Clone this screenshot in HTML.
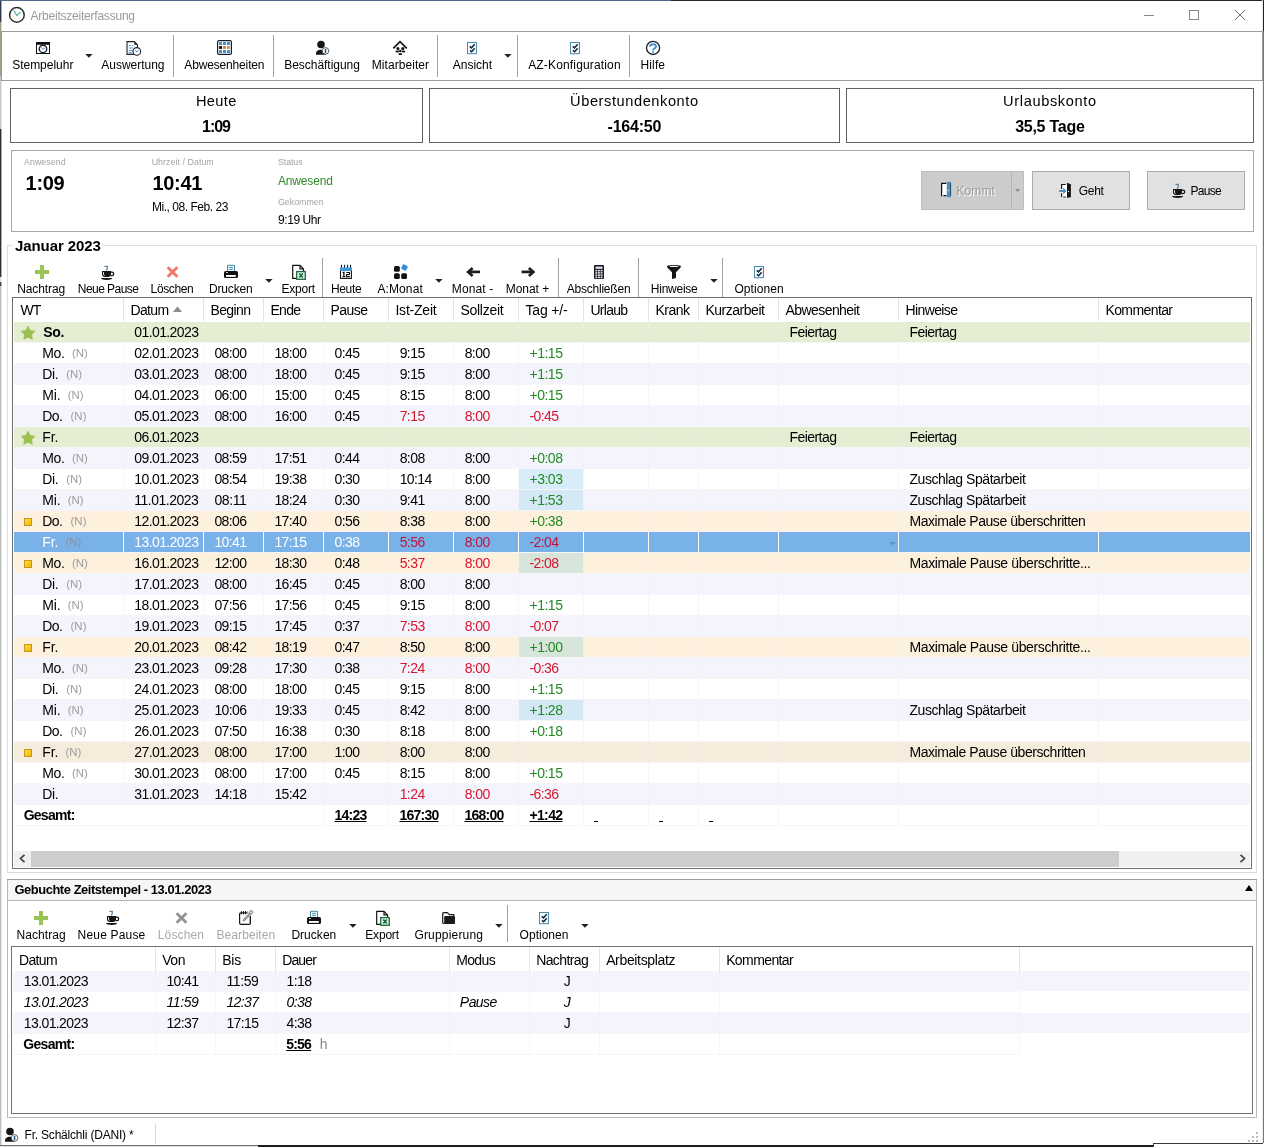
<!DOCTYPE html>
<html><head><meta charset="utf-8"><title>Arbeitszeiterfassung</title>
<style>
html,body{margin:0;padding:0;background:#fff;}
body{width:1264px;height:1147px;overflow:hidden;position:relative;font-family:"Liberation Sans",sans-serif;}
.r{position:absolute;box-sizing:border-box;}
.t{position:absolute;white-space:pre;}
#w{position:absolute;left:0;top:0;width:1264px;height:1147px;will-change:transform;}
svg{overflow:visible;}
</style></head><body><div id="w">
<div class="r" style="left:0px;top:0px;width:1264px;height:1147px;background:#fff;"></div>
<div class="r" style="left:0px;top:0px;width:1px;height:22px;background:#2b3850;"></div>
<div class="r" style="left:1px;top:0px;width:1px;height:22px;background:#2b3850;opacity:.4;"></div>
<div class="r" style="left:0px;top:22px;width:1px;height:54px;background:#a39d88;"></div>
<div class="r" style="left:1px;top:22px;width:1px;height:54px;background:#a39d88;opacity:.4;"></div>
<div class="r" style="left:0px;top:76px;width:1px;height:53px;background:#c6c6c6;"></div>
<div class="r" style="left:1px;top:76px;width:1px;height:53px;background:#c6c6c6;opacity:.4;"></div>
<div class="r" style="left:0px;top:129px;width:1px;height:148px;background:#303030;"></div>
<div class="r" style="left:1px;top:129px;width:1px;height:148px;background:#303030;opacity:.4;"></div>
<div class="r" style="left:0px;top:277px;width:1px;height:5px;background:#e0e0e0;"></div>
<div class="r" style="left:1px;top:277px;width:1px;height:5px;background:#e0e0e0;opacity:.4;"></div>
<div class="r" style="left:0px;top:282px;width:1px;height:4px;background:#404040;"></div>
<div class="r" style="left:1px;top:282px;width:1px;height:4px;background:#404040;opacity:.4;"></div>
<div class="r" style="left:0px;top:286px;width:1px;height:861px;background:#bdbdbd;"></div>
<div class="r" style="left:1px;top:286px;width:1px;height:861px;background:#bdbdbd;opacity:.4;"></div>
<div class="r" style="left:0px;top:0px;width:671px;height:1px;background:#55668a;"></div>
<div class="r" style="left:671px;top:0px;width:593px;height:1px;background:#282828;"></div>
<div class="r" style="left:1263px;top:0px;width:1px;height:31px;background:#222;"></div>
<div class="r" style="left:1263px;top:31px;width:1px;height:1116px;background:#777;"></div>
<div class="r" style="left:1262px;top:0px;width:1px;height:1147px;background:#ececec;"></div>
<div class="r" style="left:0px;top:1145px;width:258px;height:1px;background:#6e6e6e;"></div>
<div class="r" style="left:0px;top:1146px;width:258px;height:1px;background:#e4e4e4;"></div>
<div class="r" style="left:258px;top:1145px;width:895px;height:2px;background:#1e1e1e;"></div>
<div class="r" style="left:1153px;top:1143px;width:111px;height:4px;background:#fff;"></div>
<div class="r" style="left:1153px;top:1143px;width:110px;height:1px;background:#3a3a3a;"></div>
<div class="r" style="left:1153px;top:1143px;width:1px;height:4px;background:#3a3a3a;"></div>
<svg class="r" style="left:8px;top:6px" width="18" height="18" viewBox="0 0 18 18"><circle cx="8.9" cy="8.9" r="7.3" fill="#fff" stroke="#2a3030" stroke-width="1.5"/><path d="M5.9 4.3 L8.7 9.5 L12.7 6.2" fill="none" stroke="#5fb0a8" stroke-width="1.2"/></svg>
<span class="t" style="left:30.50px;top:6.00px;font-size:12px;line-height:20px;color:#999;letter-spacing:-0.222px;">Arbeitszeiterfassung</span>
<svg class="r" style="left:1144px;top:8.5px" width="12" height="12" viewBox="0 0 12 12"><path d="M0 6.5 H10" stroke="#8a8a8a" stroke-width="1"/></svg>
<svg class="r" style="left:1188px;top:9px" width="12" height="12" viewBox="0 0 12 12"><rect x="1.5" y="1.5" width="9" height="9" fill="none" stroke="#8a8a8a" stroke-width="1"/></svg>
<svg class="r" style="left:1235px;top:10px" width="10" height="10" viewBox="0 0 10 10"><path d="M0 0 L10 10 M10 0 L0 10" stroke="#707070" stroke-width="1"/></svg>
<div class="r" style="left:1px;top:31px;width:1262px;height:50px;background:#fff;border:1px solid #9c9c9c;"></div>
<span class="t" style="left:12.20px;top:55.00px;font-size:12px;line-height:20px;color:#000;letter-spacing:-0.019px;">Stempeluhr</span>
<svg class="r" style="left:85px;top:54px" width="8" height="4" viewBox="0 0 8 4"><path d="M0.2 0 H7.6 L3.9 3.7 Z" fill="#222"/></svg>
<span class="t" style="left:101.30px;top:55.00px;font-size:12px;line-height:20px;color:#000;letter-spacing:-0.019px;">Auswertung</span>
<div class="r" style="left:173px;top:35px;width:1px;height:42px;background:#a0a0a0;"></div>
<span class="t" style="left:184.30px;top:55.00px;font-size:12px;line-height:20px;color:#000;letter-spacing:-0.155px;">Abwesenheiten</span>
<div class="r" style="left:273px;top:35px;width:1px;height:42px;background:#a0a0a0;"></div>
<span class="t" style="left:284.20px;top:55.00px;font-size:12px;line-height:20px;color:#000;letter-spacing:-0.030px;">Beschäftigung</span>
<span class="t" style="left:371.80px;top:55.00px;font-size:12px;line-height:20px;color:#000;letter-spacing:0.051px;">Mitarbeiter</span>
<div class="r" style="left:437px;top:35px;width:1px;height:42px;background:#a0a0a0;"></div>
<span class="t" style="left:452.80px;top:55.00px;font-size:12px;line-height:20px;color:#000;letter-spacing:-0.025px;">Ansicht</span>
<svg class="r" style="left:503.5px;top:54px" width="8" height="4" viewBox="0 0 8 4"><path d="M0.2 0 H7.6 L3.9 3.7 Z" fill="#222"/></svg>
<div class="r" style="left:517px;top:35px;width:1px;height:42px;background:#a0a0a0;"></div>
<span class="t" style="left:528.20px;top:55.00px;font-size:12px;line-height:20px;color:#000;letter-spacing:0.157px;">AZ-Konfiguration</span>
<div class="r" style="left:629px;top:35px;width:1px;height:42px;background:#a0a0a0;"></div>
<span class="t" style="left:640.60px;top:55.00px;font-size:12px;line-height:20px;color:#000;letter-spacing:0.097px;">Hilfe</span>
<svg class="r" style="left:36px;top:42px" width="14" height="12" viewBox="0 0 14 12"><rect x="0.5" y="0.5" width="13" height="11" fill="#fff" stroke="#111" stroke-width="1"/><rect x="0" y="0" width="14" height="2.8" fill="#111"/><circle cx="7" cy="6.9" r="3.7" fill="#fff" stroke="#1c2433" stroke-width="1.4"/><path d="M5.5 5.4 L7 7.4 L8.9 5.9" fill="none" stroke="#5d82ab" stroke-width="1"/></svg>
<svg class="r" style="left:126px;top:41px" width="15" height="15" viewBox="0 0 15 15"><path d="M1 0.6 H8.3 L11.4 3.7 V13.4 H1 Z" fill="#fff" stroke="#222" stroke-width="1.1"/><path d="M8.3 0.6 V3.7 H11.4 Z" fill="#222"/><path d="M2.8 4.5 H5 M2.8 7 H7.2 M2.8 9.5 H6.6 M2.8 11.6 H5.6 M6 4.5 H7.4" stroke="#4a9ad4" stroke-width="1.1"/><circle cx="10.8" cy="10.4" r="3.8" fill="#fff" stroke="#1c2433" stroke-width="1.1"/><path d="M9.3 9.2 L10.8 10.9 L12.5 9.6" fill="none" stroke="#3a8fd0" stroke-width="1"/></svg>
<svg class="r" style="left:217px;top:40px" width="15" height="15" viewBox="0 0 15 15"><rect x="0.6" y="0.6" width="13.8" height="13.8" rx="1.4" fill="#fff" stroke="#141e30" stroke-width="1.2"/><rect x="2.10" y="2.10" width="2.9" height="2.8" fill="#3d84c0"/><rect x="6.05" y="2.10" width="2.9" height="2.8" fill="#3d84c0"/><rect x="10.00" y="2.10" width="2.9" height="2.8" fill="#3d84c0"/><rect x="2.10" y="6.10" width="2.9" height="2.8" fill="#1a0a0a"/><rect x="6.05" y="6.10" width="2.9" height="2.8" fill="#e07a4a"/><rect x="10.00" y="6.10" width="2.9" height="2.8" fill="#b0a050"/><rect x="2.10" y="10.10" width="2.9" height="2.8" fill="#3a8ab4"/><rect x="6.05" y="10.10" width="2.9" height="2.8" fill="#3d84c0"/><rect x="10.00" y="10.10" width="2.9" height="2.8" fill="#3a8ab4"/></svg>
<svg class="r" style="left:315px;top:41px" width="14" height="14" viewBox="0 0 14 14"><circle cx="6" cy="3.5" r="3.8" fill="#151515"/><path d="M1 13.7 C0.8 10.2 2.6 8.8 6 8.8 C8.4 8.8 10 9.6 10.6 11 V13.7 Z" fill="#151515"/><circle cx="10.5" cy="9.9" r="3.3" fill="#fff" stroke="#2a3540" stroke-width="0.8"/><rect x="9.8" y="7.9" width="1.5" height="4" fill="#1f4e79"/></svg>
<svg class="r" style="left:393px;top:41px" width="15" height="15" viewBox="0 0 15 15"><path d="M0.3 7.4 L7 0.7 L13.8 7.4" fill="none" stroke="#151515" stroke-width="1.7"/><circle cx="4.9" cy="7.6" r="1.55" fill="#151515"/><circle cx="9.8" cy="7.6" r="1.55" fill="#151515"/><ellipse cx="4.3" cy="10.5" rx="1.9" ry="0.9" fill="#151515"/><ellipse cx="10.5" cy="10.5" rx="1.9" ry="0.9" fill="#151515"/><circle cx="7.3" cy="10" r="1.3" fill="#151515"/><path d="M5.6 12.2 H9 V13.2 C9 14.4 5.6 14.4 5.6 13.2 Z" fill="#151515"/></svg>
<svg class="r" style="left:467px;top:42px" width="11" height="13" viewBox="0 0 11 13"><rect x="0.5" y="0.5" width="9" height="11.2" fill="#f2fdff" stroke="#4f88aa" stroke-width="1"/><path d="M2.8 4.4 L4.4 5.9 L7.7 2.2 M3 8.4 L4.6 9.8 L7.7 6.3" fill="none" stroke="#16202e" stroke-width="1.5"/></svg>
<svg class="r" style="left:570px;top:42px" width="11" height="13" viewBox="0 0 11 13"><rect x="0.5" y="0.5" width="9" height="11.2" fill="#f2fdff" stroke="#4f88aa" stroke-width="1"/><path d="M2.8 4.4 L4.4 5.9 L7.7 2.2 M3 8.4 L4.6 9.8 L7.7 6.3" fill="none" stroke="#16202e" stroke-width="1.5"/></svg>
<svg class="r" style="left:646px;top:41px" width="15" height="15" viewBox="0 0 15 15"><circle cx="7.05" cy="6.95" r="6.55" fill="#fafeff" stroke="#1a1e28" stroke-width="1.3"/><path d="M3.9 5.6 C4.2 2.6 10 2.4 10 5.5 C10 7.4 7.2 7.7 7.05 9.4" fill="none" stroke="#4a8cc0" stroke-width="1.9"/><rect x="6.2" y="10.2" width="1.7" height="1.6" fill="#4a8cc0"/></svg>
<div class="r" style="left:10px;top:88px;width:413px;height:55px;background:#fff;border:1px solid #606060;"></div>
<span class="t" style="left:195.90px;top:91.00px;font-size:14.6px;line-height:20px;color:#000;letter-spacing:0.362px;">Heute</span>
<span class="t" style="left:202.10px;top:117.00px;font-size:16px;line-height:20px;color:#000;letter-spacing:-1.072px;font-weight:bold;">1:09</span>
<div class="r" style="left:429px;top:88px;width:411px;height:55px;background:#fff;border:1px solid #606060;"></div>
<span class="t" style="left:570.10px;top:91.00px;font-size:14.6px;line-height:20px;color:#000;letter-spacing:0.579px;">Überstundenkonto</span>
<span class="t" style="left:607.60px;top:117.00px;font-size:16px;line-height:20px;color:#000;letter-spacing:-0.225px;font-weight:bold;">-164:50</span>
<div class="r" style="left:846px;top:88px;width:408px;height:55px;background:#fff;border:1px solid #606060;"></div>
<span class="t" style="left:1003.10px;top:91.00px;font-size:14.6px;line-height:20px;color:#000;letter-spacing:0.634px;">Urlaubskonto</span>
<span class="t" style="left:1015.15px;top:117.00px;font-size:16px;line-height:20px;color:#000;letter-spacing:-0.255px;font-weight:bold;">35,5 Tage</span>
<div class="r" style="left:11px;top:150px;width:1243px;height:82px;background:#fff;border:1px solid #a9a9a9;"></div>
<span class="t" style="left:24.00px;top:152.00px;font-size:8.8px;line-height:20px;color:#a3a3a3;letter-spacing:0.086px;">Anwesend</span>
<span class="t" style="left:25.60px;top:173.00px;font-size:20px;line-height:20px;color:#000;letter-spacing:-0.340px;font-weight:bold;">1:09</span>
<span class="t" style="left:151.70px;top:152.00px;font-size:8.8px;line-height:20px;color:#a3a3a3;letter-spacing:0.063px;">Uhrzeit / Datum</span>
<span class="t" style="left:152.50px;top:173.00px;font-size:20px;line-height:20px;color:#000;letter-spacing:-0.340px;font-weight:bold;">10:41</span>
<span class="t" style="left:152.00px;top:197.00px;font-size:12px;line-height:20px;color:#000;letter-spacing:-0.465px;">Mi., 08. Feb. 23</span>
<span class="t" style="left:278.00px;top:152.00px;font-size:8.8px;line-height:20px;color:#a3a3a3;letter-spacing:-0.070px;">Status</span>
<span class="t" style="left:278.00px;top:171.00px;font-size:12px;line-height:20px;color:#2d8a2d;letter-spacing:-0.177px;">Anwesend</span>
<span class="t" style="left:278.00px;top:192.00px;font-size:8.8px;line-height:20px;color:#a3a3a3;letter-spacing:0.017px;">Gekommen</span>
<span class="t" style="left:278.00px;top:210.00px;font-size:12px;line-height:20px;color:#000;letter-spacing:-0.431px;">9:19 Uhr</span>
<div class="r" style="left:921px;top:171px;width:103px;height:39px;background:#cccccc;border:1px solid #bfbfbf;"></div>
<div class="r" style="left:1011px;top:172px;width:1px;height:37px;background:#b5b5b5;"></div>
<span class="t" style="left:956.40px;top:181.00px;font-size:12px;line-height:20px;color:#9a9a9a;letter-spacing:0.124px;text-shadow:1px 1px 0 #fff;">Kommt</span>
<svg class="r" style="left:1014.7px;top:189px" width="6" height="4" viewBox="0 0 6 4"><path d="M0 0 H5.2 L2.6 3 Z" fill="#8c8c8c"/></svg>
<div class="r" style="left:1032px;top:171px;width:98px;height:39px;background:#e1e1e1;border:1px solid #adadad;"></div>
<span class="t" style="left:1078.80px;top:181.00px;font-size:12px;line-height:20px;color:#000;letter-spacing:-0.339px;">Geht</span>
<div class="r" style="left:1147px;top:171px;width:98px;height:39px;background:#e1e1e1;border:1px solid #adadad;"></div>
<span class="t" style="left:1190.60px;top:181.00px;font-size:12px;line-height:20px;color:#000;letter-spacing:-0.755px;">Pause</span>
<svg class="r" style="left:940px;top:181px" width="12" height="17" viewBox="0 0 12 17"><rect x="1.6" y="2.4" width="5.4" height="12.2" fill="#fff"/><path d="M6.4 2.4 H1.6 V14.6 H2.2 M3.4 14.6 H6.4" fill="none" stroke="#111" stroke-width="1.2"/><rect x="6.8" y="0.8" width="4" height="15.4" fill="#4a90c4"/><rect x="10.4" y="2" width="0.7" height="13" fill="#1a2a3a"/><circle cx="8.6" cy="9.4" r="0.65" fill="#e8ffff"/></svg>
<svg class="r" style="left:1059px;top:182px" width="13" height="17" viewBox="0 0 13 17"><rect x="2.6" y="2.5" width="5.6" height="12.5" fill="#fff"/><path d="M6.8 2.5 H2.6 V7 M2.6 11.2 V15 M4.2 15 H6.8" fill="none" stroke="#15202a" stroke-width="1.2"/><path d="M0.2 8 H4.2 V5.6 L7.4 9 L4.2 12.4 V10 H0.2 Z" fill="#4a8fc0"/><path d="M8 0.8 L11.9 2.3 V15.2 L8 15.7 Z" fill="#141414"/><circle cx="9.5" cy="9.5" r="0.65" fill="#fff"/></svg>
<svg class="r" style="left:1171.5px;top:182.5px" width="15" height="15" viewBox="0 0 15 15"><path d="M3.4 1.3 H6.8 C5 2.2 7.8 3.4 5.2 5.4" fill="none" stroke="#5a83a3" stroke-width="1.3"/><path d="M1 6 H10 V9.2 C10 11.2 8.6 12 5.5 12 C2.4 12 1 11.2 1 9.2 Z" fill="#151515"/><path d="M10 7.2 H11 C13.2 7.2 13.2 10.6 11 10.6 H9.6" fill="none" stroke="#151515" stroke-width="1.3"/><path d="M2.5 7.2 V9.2 C2.5 10 2.9 10.4 3.5 10.6" fill="none" stroke="#fff" stroke-width="0.9"/><path d="M0 13.1 H11.2 C10.6 14.6 9 15 5.6 15 C2.2 15 0.6 14.6 0 13.1 Z" fill="#151515"/></svg>
<div class="r" style="left:7px;top:245px;width:1250px;height:628px;border:1px solid #dcdcdc;"></div>
<div class="r" style="left:12px;top:238px;width:90px;height:16px;background:#fff;"></div>
<span class="t" style="left:15.00px;top:236.00px;font-size:15px;line-height:20px;color:#000;letter-spacing:-0.093px;font-weight:bold;">Januar 2023</span>
<span class="t" style="left:17.20px;top:279.00px;font-size:12px;line-height:20px;color:#000;letter-spacing:-0.085px;">Nachtrag</span>
<span class="t" style="left:77.80px;top:279.00px;font-size:12px;line-height:20px;color:#000;letter-spacing:-0.539px;">Neue Pause</span>
<span class="t" style="left:150.60px;top:279.00px;font-size:12px;line-height:20px;color:#000;letter-spacing:-0.379px;">Löschen</span>
<span class="t" style="left:208.90px;top:279.00px;font-size:12px;line-height:20px;color:#000;letter-spacing:-0.148px;">Drucken</span>
<svg class="r" style="left:265px;top:278.5px" width="8" height="4" viewBox="0 0 8 4"><path d="M0.2 0 H7.6 L3.9 3.7 Z" fill="#222"/></svg>
<span class="t" style="left:281.50px;top:279.00px;font-size:12px;line-height:20px;color:#000;letter-spacing:-0.236px;">Export</span>
<div class="r" style="left:322px;top:258px;width:1px;height:39px;background:#a0a0a0;"></div>
<span class="t" style="left:330.90px;top:279.00px;font-size:12px;line-height:20px;color:#000;letter-spacing:-0.304px;">Heute</span>
<span class="t" style="left:377.40px;top:279.00px;font-size:12px;line-height:20px;color:#000;letter-spacing:0.119px;">A:Monat</span>
<svg class="r" style="left:434.5px;top:278.5px" width="8" height="4" viewBox="0 0 8 4"><path d="M0.2 0 H7.6 L3.9 3.7 Z" fill="#222"/></svg>
<span class="t" style="left:451.80px;top:279.00px;font-size:12px;line-height:20px;color:#000;letter-spacing:0.137px;">Monat -</span>
<span class="t" style="left:505.80px;top:279.00px;font-size:12px;line-height:20px;color:#000;letter-spacing:-0.049px;">Monat +</span>
<div class="r" style="left:558px;top:258px;width:1px;height:39px;background:#a0a0a0;"></div>
<span class="t" style="left:566.70px;top:279.00px;font-size:12px;line-height:20px;color:#000;letter-spacing:-0.214px;">Abschließen</span>
<div class="r" style="left:638px;top:258px;width:1px;height:39px;background:#a0a0a0;"></div>
<span class="t" style="left:650.80px;top:279.00px;font-size:12px;line-height:20px;color:#000;letter-spacing:-0.241px;">Hinweise</span>
<svg class="r" style="left:709.5px;top:278.5px" width="8" height="4" viewBox="0 0 8 4"><path d="M0.2 0 H7.6 L3.9 3.7 Z" fill="#222"/></svg>
<div class="r" style="left:722px;top:258px;width:1px;height:39px;background:#a0a0a0;"></div>
<span class="t" style="left:734.40px;top:279.00px;font-size:12px;line-height:20px;color:#000;letter-spacing:0.085px;">Optionen</span>
<svg class="r" style="left:35px;top:265px" width="14" height="14" viewBox="0 0 14 14"><path d="M5 0 H9 V5 H14 V9 H9 V14 H5 V9 H0 V5 H5 Z" fill="#99c354"/></svg>
<svg class="r" style="left:101.3px;top:264.6px" width="15" height="15" viewBox="0 0 15 15"><path d="M3.4 1.3 H6.8 C5 2.2 7.8 3.4 5.2 5.4" fill="none" stroke="#5a83a3" stroke-width="1.3"/><path d="M1 6 H10 V9.2 C10 11.2 8.6 12 5.5 12 C2.4 12 1 11.2 1 9.2 Z" fill="#151515"/><path d="M10 7.2 H11 C13.2 7.2 13.2 10.6 11 10.6 H9.6" fill="none" stroke="#151515" stroke-width="1.3"/><path d="M2.5 7.2 V9.2 C2.5 10 2.9 10.4 3.5 10.6" fill="none" stroke="#fff" stroke-width="0.9"/><path d="M0 13.1 H11.2 C10.6 14.6 9 15 5.6 15 C2.2 15 0.6 14.6 0 13.1 Z" fill="#151515"/></svg>
<svg class="r" style="left:166px;top:266px" width="13" height="12" viewBox="0 0 13 12"><path d="M1.6 1.2 L11.4 10.8 M11.4 1.2 L1.6 10.8" stroke="#f3746a" stroke-width="2.9"/></svg>
<svg class="r" style="left:224px;top:264px" width="14" height="15" viewBox="0 0 14 15"><path d="M3.5 7 V1.3 H10.5 V7" fill="#e6fbff" stroke="#4787a8" stroke-width="1"/><path d="M5.2 3.4 H8.8 M5.2 5.4 H8.8" stroke="#4787a8" stroke-width="1"/><rect x="0" y="6.9" width="14" height="7.1" rx="1.6" fill="#111"/><rect x="2" y="11" width="9.8" height="1.9" fill="#fff"/><rect x="2" y="8.1" width="1.9" height="0.8" rx="0.4" fill="#fff"/></svg>
<svg class="r" style="left:292px;top:264px" width="14" height="16" viewBox="0 0 14 16"><path d="M0.7 1.4 H8 L11.5 4.9 V14.4 H0.7 Z" fill="#fff" stroke="#111" stroke-width="1.2" stroke-linejoin="round"/><path d="M8 1.4 V4.9 H11.5" fill="none" stroke="#111" stroke-width="1.2"/><rect x="4.7" y="7.6" width="8.6" height="7.7" fill="#dcf5e8" stroke="#1e6b3a" stroke-width="1.3"/><path d="M7.3 9.5 L10.8 13.5 M10.8 9.5 L7.3 13.5" stroke="#176337" stroke-width="1.5"/></svg>
<svg class="r" style="left:339px;top:264px" width="14" height="15" viewBox="0 0 14 15"><rect x="1.5" y="5" width="10.9" height="9.4" fill="#fff" stroke="#111" stroke-width="1.1"/><path d="M2.5 0.8 V4 M5.5 0.8 V4 M8.5 0.8 V4 M11.5 0.8 V4" stroke="#10202a" stroke-width="1.1"/><rect x="1" y="3.5" width="11.9" height="3.5" fill="#3d9bd8"/><path d="M3.6 8.7 L4.9 8.3 V12.4 M3.5 12.6 H6.3" fill="none" stroke="#111" stroke-width="1.3"/><path d="M7.4 8.5 H10.4 V10.5 H7.6 V12.6 H10.8" fill="none" stroke="#111" stroke-width="1.2"/></svg>
<svg class="r" style="left:393px;top:264px" width="16" height="16" viewBox="0 0 16 16"><rect x="1" y="2" width="5.8" height="5.8" rx="1.5" fill="#121212"/><rect x="1" y="9.2" width="5.8" height="5.8" rx="1.5" fill="#121212"/><rect x="8.2" y="9.2" width="5.8" height="5.8" rx="1.5" fill="#121212"/><rect x="8.8" y="0.8" width="5.4" height="5.4" rx="1.2" fill="#2f8fdc" transform="rotate(30 11.5 3.5)"/></svg>
<svg class="r" style="left:466px;top:267px" width="15" height="10" viewBox="0 0 15 10"><path d="M14 4.9 H3.5" fill="none" stroke="#1e1e1e" stroke-width="2.7"/><path d="M6.6 0.9 L2.2 4.9 L6.6 8.9" fill="none" stroke="#1e1e1e" stroke-width="2.7" stroke-linejoin="miter"/></svg>
<svg class="r" style="left:521px;top:267px" width="15" height="10" viewBox="0 0 15 10"><path d="M0.6 4.9 H11" fill="none" stroke="#1e1e1e" stroke-width="2.7"/><path d="M7.9 0.9 L12.3 4.9 L7.9 8.9" fill="none" stroke="#1e1e1e" stroke-width="2.7" stroke-linejoin="miter"/></svg>
<svg class="r" style="left:594px;top:265px" width="10" height="14" viewBox="0 0 10 14"><rect x="0" y="0" width="10" height="14" rx="0.8" fill="#1b1b28"/><rect x="1.5" y="1.6" width="7" height="2.2" fill="#dfeaf6"/><rect x="1.4" y="4.90" width="1.9" height="1.5" fill="#f3e9ec"/><rect x="4.0" y="4.90" width="1.9" height="1.5" fill="#f3e9ec"/><rect x="6.6" y="4.90" width="1.9" height="1.5" fill="#f3e9ec"/><rect x="1.4" y="7.15" width="1.9" height="1.5" fill="#f3e9ec"/><rect x="4.0" y="7.15" width="1.9" height="1.5" fill="#f3e9ec"/><rect x="6.6" y="7.15" width="1.9" height="1.5" fill="#f3e9ec"/><rect x="1.4" y="9.40" width="1.9" height="1.5" fill="#f3e9ec"/><rect x="4.0" y="9.40" width="1.9" height="1.5" fill="#f3e9ec"/><rect x="6.6" y="9.40" width="1.9" height="1.5" fill="#f3e9ec"/><rect x="1.4" y="11.65" width="1.9" height="1.5" fill="#f3e9ec"/><rect x="4.0" y="11.65" width="1.9" height="1.5" fill="#f3e9ec"/><rect x="6.6" y="11.65" width="1.9" height="1.5" fill="#f3e9ec"/></svg>
<svg class="r" style="left:666px;top:265px" width="16" height="15" viewBox="0 0 16 15"><path d="M0.9 1.5 C0.9 -0.5 15 -0.5 15 1.5 C15 2.8 11 5.8 10 7.3 V12.3 C10 13.2 7.5 14 6 14 V7.3 C5 5.8 0.9 2.8 0.9 1.5 Z" fill="#151515"/><ellipse cx="8" cy="1.4" rx="4.4" ry="0.7" fill="#fff"/></svg>
<svg class="r" style="left:754px;top:266px" width="11" height="13" viewBox="0 0 11 13"><rect x="0.5" y="0.5" width="9" height="11.2" fill="#f2fdff" stroke="#4f88aa" stroke-width="1"/><path d="M2.8 4.4 L4.4 5.9 L7.7 2.2 M3 8.4 L4.6 9.8 L7.7 6.3" fill="none" stroke="#16202e" stroke-width="1.5"/></svg>
<div class="r" style="left:12px;top:297px;width:1240px;height:572px;background:#fff;border:1px solid #6e6e6e;"></div>
<span class="t" style="left:20.44px;top:300.00px;font-size:14.0px;line-height:20px;color:#000;letter-spacing:-0.883px;">WT</span>
<span class="t" style="left:130.44px;top:300.00px;font-size:14.0px;line-height:20px;color:#000;letter-spacing:-0.647px;">Datum</span>
<span class="t" style="left:210.44px;top:300.00px;font-size:14.0px;line-height:20px;color:#000;letter-spacing:-0.599px;">Beginn</span>
<span class="t" style="left:270.44px;top:300.00px;font-size:14.0px;line-height:20px;color:#000;letter-spacing:-0.674px;">Ende</span>
<span class="t" style="left:330.44px;top:300.00px;font-size:14.0px;line-height:20px;color:#000;letter-spacing:-0.539px;">Pause</span>
<span class="t" style="left:395.44px;top:300.00px;font-size:14.0px;line-height:20px;color:#000;letter-spacing:-0.222px;">Ist-Zeit</span>
<span class="t" style="left:460.44px;top:300.00px;font-size:14.0px;line-height:20px;color:#000;letter-spacing:-0.266px;">Sollzeit</span>
<span class="t" style="left:525.44px;top:300.00px;font-size:14.0px;line-height:20px;color:#000;letter-spacing:-0.170px;">Tag +/-</span>
<span class="t" style="left:590.44px;top:300.00px;font-size:14.0px;line-height:20px;color:#000;letter-spacing:-0.707px;">Urlaub</span>
<span class="t" style="left:655.44px;top:300.00px;font-size:14.0px;line-height:20px;color:#000;letter-spacing:-0.515px;">Krank</span>
<span class="t" style="left:705.44px;top:300.00px;font-size:14.0px;line-height:20px;color:#000;letter-spacing:-0.481px;">Kurzarbeit</span>
<span class="t" style="left:785.44px;top:300.00px;font-size:14.0px;line-height:20px;color:#000;letter-spacing:-0.561px;">Abwesenheit</span>
<span class="t" style="left:905.44px;top:300.00px;font-size:14.0px;line-height:20px;color:#000;letter-spacing:-0.600px;">Hinweise</span>
<span class="t" style="left:1105.44px;top:300.00px;font-size:14.0px;line-height:20px;color:#000;letter-spacing:-0.595px;">Kommentar</span>
<svg class="r" style="left:173px;top:306px" width="9" height="6" viewBox="0 0 9 6"><path d="M0 6 L4.5 0.5 L9 6 Z" fill="#8a8a8a"/></svg>
<div class="r" style="left:14px;top:322px;width:1236px;height:20px;background:#e5eed3;"></div>
<svg class="r" style="left:20px;top:325px" width="16" height="16" viewBox="0 0 16 16"><polygon points="8.05,1.30 10.22,5.51 14.90,6.28 11.57,9.64 12.28,14.32 8.05,12.20 3.82,14.32 4.53,9.64 1.20,6.28 5.88,5.51" fill="#9bc04f" stroke="#9bc04f" stroke-width="0.8" stroke-linejoin="round"/></svg>
<span class="t" style="left:43.14px;top:322.00px;font-size:14.0px;line-height:20px;color:#000;font-weight:bold;letter-spacing:-0.260px;">So.</span>
<span class="t" style="left:134.34px;top:322.00px;font-size:14.0px;line-height:20px;color:#000;letter-spacing:-0.607px;">01.01.2023</span>
<span class="t" style="left:789.44px;top:322.00px;font-size:14.0px;line-height:20px;color:#000;letter-spacing:-0.545px;">Feiertag</span>
<span class="t" style="left:909.44px;top:322.00px;font-size:14.0px;line-height:20px;color:#000;letter-spacing:-0.545px;">Feiertag</span>
<span class="t" style="left:42.34px;top:343.00px;font-size:14.0px;line-height:20px;color:#000;letter-spacing:-0.446px;">Mo.</span>
<span class="t" style="left:71.97px;top:343.00px;font-size:11.415384615384614px;line-height:20px;color:#9c9c9c;letter-spacing:0.051px;">(N)</span>
<span class="t" style="left:134.34px;top:343.00px;font-size:14.0px;line-height:20px;color:#000;letter-spacing:-0.607px;">02.01.2023</span>
<span class="t" style="left:214.44px;top:343.00px;font-size:14.0px;line-height:20px;color:#000;letter-spacing:-0.607px;">08:00</span>
<span class="t" style="left:274.44px;top:343.00px;font-size:14.0px;line-height:20px;color:#000;letter-spacing:-0.607px;">18:00</span>
<span class="t" style="left:334.44px;top:343.00px;font-size:14.0px;line-height:20px;color:#000;letter-spacing:-0.562px;">0:45</span>
<span class="t" style="left:399.64px;top:343.00px;font-size:14.0px;line-height:20px;color:#000;letter-spacing:-0.562px;">9:15</span>
<span class="t" style="left:464.64px;top:343.00px;font-size:14.0px;line-height:20px;color:#000;letter-spacing:-0.562px;">8:00</span>
<span class="t" style="left:529.44px;top:343.00px;font-size:14.0px;line-height:20px;color:#228b22;letter-spacing:-0.485px;">+1:15</span>
<div class="r" style="left:14px;top:364px;width:1236px;height:20px;background:#f4f5fc;"></div>
<span class="t" style="left:42.34px;top:364.00px;font-size:14.0px;line-height:20px;color:#000;letter-spacing:-0.370px;">Di.</span>
<span class="t" style="left:66.19px;top:364.00px;font-size:11.415384615384614px;line-height:20px;color:#9c9c9c;letter-spacing:0.051px;">(N)</span>
<span class="t" style="left:134.34px;top:364.00px;font-size:14.0px;line-height:20px;color:#000;letter-spacing:-0.607px;">03.01.2023</span>
<span class="t" style="left:214.44px;top:364.00px;font-size:14.0px;line-height:20px;color:#000;letter-spacing:-0.607px;">08:00</span>
<span class="t" style="left:274.44px;top:364.00px;font-size:14.0px;line-height:20px;color:#000;letter-spacing:-0.607px;">18:00</span>
<span class="t" style="left:334.44px;top:364.00px;font-size:14.0px;line-height:20px;color:#000;letter-spacing:-0.562px;">0:45</span>
<span class="t" style="left:399.64px;top:364.00px;font-size:14.0px;line-height:20px;color:#000;letter-spacing:-0.562px;">9:15</span>
<span class="t" style="left:464.64px;top:364.00px;font-size:14.0px;line-height:20px;color:#000;letter-spacing:-0.562px;">8:00</span>
<span class="t" style="left:529.44px;top:364.00px;font-size:14.0px;line-height:20px;color:#228b22;letter-spacing:-0.485px;">+1:15</span>
<span class="t" style="left:42.34px;top:385.00px;font-size:14.0px;line-height:20px;color:#000;letter-spacing:-0.221px;">Mi.</span>
<span class="t" style="left:67.63px;top:385.00px;font-size:11.415384615384614px;line-height:20px;color:#9c9c9c;letter-spacing:0.051px;">(N)</span>
<span class="t" style="left:134.34px;top:385.00px;font-size:14.0px;line-height:20px;color:#000;letter-spacing:-0.607px;">04.01.2023</span>
<span class="t" style="left:214.44px;top:385.00px;font-size:14.0px;line-height:20px;color:#000;letter-spacing:-0.607px;">06:00</span>
<span class="t" style="left:274.44px;top:385.00px;font-size:14.0px;line-height:20px;color:#000;letter-spacing:-0.607px;">15:00</span>
<span class="t" style="left:334.44px;top:385.00px;font-size:14.0px;line-height:20px;color:#000;letter-spacing:-0.562px;">0:45</span>
<span class="t" style="left:399.64px;top:385.00px;font-size:14.0px;line-height:20px;color:#000;letter-spacing:-0.562px;">8:15</span>
<span class="t" style="left:464.64px;top:385.00px;font-size:14.0px;line-height:20px;color:#000;letter-spacing:-0.562px;">8:00</span>
<span class="t" style="left:529.44px;top:385.00px;font-size:14.0px;line-height:20px;color:#228b22;letter-spacing:-0.485px;">+0:15</span>
<div class="r" style="left:14px;top:406px;width:1236px;height:20px;background:#f4f5fc;"></div>
<span class="t" style="left:42.34px;top:406.00px;font-size:14.0px;line-height:20px;color:#000;letter-spacing:-0.595px;">Do.</span>
<span class="t" style="left:70.53px;top:406.00px;font-size:11.415384615384614px;line-height:20px;color:#9c9c9c;letter-spacing:0.051px;">(N)</span>
<span class="t" style="left:134.34px;top:406.00px;font-size:14.0px;line-height:20px;color:#000;letter-spacing:-0.607px;">05.01.2023</span>
<span class="t" style="left:214.44px;top:406.00px;font-size:14.0px;line-height:20px;color:#000;letter-spacing:-0.607px;">08:00</span>
<span class="t" style="left:274.44px;top:406.00px;font-size:14.0px;line-height:20px;color:#000;letter-spacing:-0.607px;">16:00</span>
<span class="t" style="left:334.44px;top:406.00px;font-size:14.0px;line-height:20px;color:#000;letter-spacing:-0.562px;">0:45</span>
<span class="t" style="left:399.64px;top:406.00px;font-size:14.0px;line-height:20px;color:#d8152f;letter-spacing:-0.562px;">7:15</span>
<span class="t" style="left:464.64px;top:406.00px;font-size:14.0px;line-height:20px;color:#d8152f;letter-spacing:-0.562px;">8:00</span>
<span class="t" style="left:529.44px;top:406.00px;font-size:14.0px;line-height:20px;color:#d8152f;letter-spacing:-0.582px;">-0:45</span>
<div class="r" style="left:14px;top:427px;width:1236px;height:20px;background:#e5eed3;"></div>
<svg class="r" style="left:20px;top:430px" width="16" height="16" viewBox="0 0 16 16"><polygon points="8.05,1.30 10.22,5.51 14.90,6.28 11.57,9.64 12.28,14.32 8.05,12.20 3.82,14.32 4.53,9.64 1.20,6.28 5.88,5.51" fill="#9bc04f" stroke="#9bc04f" stroke-width="0.8" stroke-linejoin="round"/></svg>
<span class="t" style="left:42.34px;top:427.00px;font-size:14.0px;line-height:20px;color:#000;letter-spacing:-0.110px;">Fr.</span>
<span class="t" style="left:134.34px;top:427.00px;font-size:14.0px;line-height:20px;color:#000;letter-spacing:-0.607px;">06.01.2023</span>
<span class="t" style="left:789.44px;top:427.00px;font-size:14.0px;line-height:20px;color:#000;letter-spacing:-0.545px;">Feiertag</span>
<span class="t" style="left:909.44px;top:427.00px;font-size:14.0px;line-height:20px;color:#000;letter-spacing:-0.545px;">Feiertag</span>
<div class="r" style="left:14px;top:448px;width:1236px;height:20px;background:#f4f5fc;"></div>
<span class="t" style="left:42.34px;top:448.00px;font-size:14.0px;line-height:20px;color:#000;letter-spacing:-0.446px;">Mo.</span>
<span class="t" style="left:71.97px;top:448.00px;font-size:11.415384615384614px;line-height:20px;color:#9c9c9c;letter-spacing:0.051px;">(N)</span>
<span class="t" style="left:134.34px;top:448.00px;font-size:14.0px;line-height:20px;color:#000;letter-spacing:-0.607px;">09.01.2023</span>
<span class="t" style="left:214.44px;top:448.00px;font-size:14.0px;line-height:20px;color:#000;letter-spacing:-0.607px;">08:59</span>
<span class="t" style="left:274.44px;top:448.00px;font-size:14.0px;line-height:20px;color:#000;letter-spacing:-0.607px;">17:51</span>
<span class="t" style="left:334.44px;top:448.00px;font-size:14.0px;line-height:20px;color:#000;letter-spacing:-0.562px;">0:44</span>
<span class="t" style="left:399.64px;top:448.00px;font-size:14.0px;line-height:20px;color:#000;letter-spacing:-0.562px;">8:08</span>
<span class="t" style="left:464.64px;top:448.00px;font-size:14.0px;line-height:20px;color:#000;letter-spacing:-0.562px;">8:00</span>
<span class="t" style="left:529.44px;top:448.00px;font-size:14.0px;line-height:20px;color:#228b22;letter-spacing:-0.485px;">+0:08</span>
<div class="r" style="left:519px;top:469px;width:64px;height:20px;background:#d8edf8;"></div>
<span class="t" style="left:42.34px;top:469.00px;font-size:14.0px;line-height:20px;color:#000;letter-spacing:-0.370px;">Di.</span>
<span class="t" style="left:66.19px;top:469.00px;font-size:11.415384615384614px;line-height:20px;color:#9c9c9c;letter-spacing:0.051px;">(N)</span>
<span class="t" style="left:134.34px;top:469.00px;font-size:14.0px;line-height:20px;color:#000;letter-spacing:-0.607px;">10.01.2023</span>
<span class="t" style="left:214.44px;top:469.00px;font-size:14.0px;line-height:20px;color:#000;letter-spacing:-0.607px;">08:54</span>
<span class="t" style="left:274.44px;top:469.00px;font-size:14.0px;line-height:20px;color:#000;letter-spacing:-0.607px;">19:38</span>
<span class="t" style="left:334.44px;top:469.00px;font-size:14.0px;line-height:20px;color:#000;letter-spacing:-0.562px;">0:30</span>
<span class="t" style="left:399.64px;top:469.00px;font-size:14.0px;line-height:20px;color:#000;letter-spacing:-0.607px;">10:14</span>
<span class="t" style="left:464.64px;top:469.00px;font-size:14.0px;line-height:20px;color:#000;letter-spacing:-0.562px;">8:00</span>
<span class="t" style="left:529.44px;top:469.00px;font-size:14.0px;line-height:20px;color:#228b22;letter-spacing:-0.485px;">+3:03</span>
<span class="t" style="left:909.44px;top:469.00px;font-size:14.0px;line-height:20px;color:#000;letter-spacing:-0.448px;">Zuschlag Spätarbeit</span>
<div class="r" style="left:14px;top:490px;width:1236px;height:20px;background:#f4f5fc;"></div>
<div class="r" style="left:519px;top:490px;width:64px;height:20px;background:#d5e8f5;"></div>
<span class="t" style="left:42.34px;top:490.00px;font-size:14.0px;line-height:20px;color:#000;letter-spacing:-0.221px;">Mi.</span>
<span class="t" style="left:67.63px;top:490.00px;font-size:11.415384615384614px;line-height:20px;color:#9c9c9c;letter-spacing:0.051px;">(N)</span>
<span class="t" style="left:134.34px;top:490.00px;font-size:14.0px;line-height:20px;color:#000;letter-spacing:-0.503px;">11.01.2023</span>
<span class="t" style="left:214.44px;top:490.00px;font-size:14.0px;line-height:20px;color:#000;letter-spacing:-0.399px;">08:11</span>
<span class="t" style="left:274.44px;top:490.00px;font-size:14.0px;line-height:20px;color:#000;letter-spacing:-0.607px;">18:24</span>
<span class="t" style="left:334.44px;top:490.00px;font-size:14.0px;line-height:20px;color:#000;letter-spacing:-0.562px;">0:30</span>
<span class="t" style="left:399.64px;top:490.00px;font-size:14.0px;line-height:20px;color:#000;letter-spacing:-0.562px;">9:41</span>
<span class="t" style="left:464.64px;top:490.00px;font-size:14.0px;line-height:20px;color:#000;letter-spacing:-0.562px;">8:00</span>
<span class="t" style="left:529.44px;top:490.00px;font-size:14.0px;line-height:20px;color:#228b22;letter-spacing:-0.485px;">+1:53</span>
<span class="t" style="left:909.44px;top:490.00px;font-size:14.0px;line-height:20px;color:#000;letter-spacing:-0.448px;">Zuschlag Spätarbeit</span>
<div class="r" style="left:14px;top:511px;width:1236px;height:20px;background:#fdf0dc;"></div>
<svg class="r" style="left:24px;top:518px" width="8" height="8" viewBox="0 0 8 8"><defs><linearGradient id="gq" x1="0" y1="0" x2="1" y2="1"><stop offset="0" stop-color="#ffe24a"/><stop offset="1" stop-color="#f0b000"/></linearGradient></defs><rect x="0.5" y="0.5" width="7" height="7" fill="url(#gq)" stroke="#c39a1e" stroke-width="1"/></svg>
<span class="t" style="left:42.34px;top:511.00px;font-size:14.0px;line-height:20px;color:#000;letter-spacing:-0.595px;">Do.</span>
<span class="t" style="left:70.53px;top:511.00px;font-size:11.415384615384614px;line-height:20px;color:#9c9c9c;letter-spacing:0.051px;">(N)</span>
<span class="t" style="left:134.34px;top:511.00px;font-size:14.0px;line-height:20px;color:#000;letter-spacing:-0.607px;">12.01.2023</span>
<span class="t" style="left:214.44px;top:511.00px;font-size:14.0px;line-height:20px;color:#000;letter-spacing:-0.607px;">08:06</span>
<span class="t" style="left:274.44px;top:511.00px;font-size:14.0px;line-height:20px;color:#000;letter-spacing:-0.607px;">17:40</span>
<span class="t" style="left:334.44px;top:511.00px;font-size:14.0px;line-height:20px;color:#000;letter-spacing:-0.562px;">0:56</span>
<span class="t" style="left:399.64px;top:511.00px;font-size:14.0px;line-height:20px;color:#000;letter-spacing:-0.562px;">8:38</span>
<span class="t" style="left:464.64px;top:511.00px;font-size:14.0px;line-height:20px;color:#000;letter-spacing:-0.562px;">8:00</span>
<span class="t" style="left:529.44px;top:511.00px;font-size:14.0px;line-height:20px;color:#228b22;letter-spacing:-0.485px;">+0:38</span>
<span class="t" style="left:909.44px;top:511.00px;font-size:14.0px;line-height:20px;color:#000;letter-spacing:-0.440px;">Maximale Pause überschritten</span>
<div class="r" style="left:14px;top:532px;width:1236px;height:20px;background:#79b2e9;"></div>
<span class="t" style="left:42.34px;top:532.00px;font-size:14.0px;line-height:20px;color:#fff;letter-spacing:-0.110px;">Fr.</span>
<span class="t" style="left:65.46px;top:532.00px;font-size:11.415384615384614px;line-height:20px;color:#8894a6;letter-spacing:0.051px;">(N)</span>
<span class="t" style="left:134.34px;top:532.00px;font-size:14.0px;line-height:20px;color:#fff;letter-spacing:-0.607px;">13.01.2023</span>
<span class="t" style="left:214.44px;top:532.00px;font-size:14.0px;line-height:20px;color:#fff;letter-spacing:-0.607px;">10:41</span>
<span class="t" style="left:274.44px;top:532.00px;font-size:14.0px;line-height:20px;color:#fff;letter-spacing:-0.607px;">17:15</span>
<span class="t" style="left:334.44px;top:532.00px;font-size:14.0px;line-height:20px;color:#fff;letter-spacing:-0.562px;">0:38</span>
<span class="t" style="left:399.64px;top:532.00px;font-size:14.0px;line-height:20px;color:#bf1540;letter-spacing:-0.562px;">5:56</span>
<span class="t" style="left:464.64px;top:532.00px;font-size:14.0px;line-height:20px;color:#bf1540;letter-spacing:-0.562px;">8:00</span>
<span class="t" style="left:529.44px;top:532.00px;font-size:14.0px;line-height:20px;color:#bf1540;letter-spacing:-0.582px;">-2:04</span>
<div class="r" style="left:14px;top:553px;width:1236px;height:20px;background:#fdf0dc;"></div>
<div class="r" style="left:519px;top:553px;width:64px;height:20px;background:#d8e5da;"></div>
<svg class="r" style="left:24px;top:560px" width="8" height="8" viewBox="0 0 8 8"><defs><linearGradient id="gq" x1="0" y1="0" x2="1" y2="1"><stop offset="0" stop-color="#ffe24a"/><stop offset="1" stop-color="#f0b000"/></linearGradient></defs><rect x="0.5" y="0.5" width="7" height="7" fill="url(#gq)" stroke="#c39a1e" stroke-width="1"/></svg>
<span class="t" style="left:42.34px;top:553.00px;font-size:14.0px;line-height:20px;color:#000;letter-spacing:-0.446px;">Mo.</span>
<span class="t" style="left:71.97px;top:553.00px;font-size:11.415384615384614px;line-height:20px;color:#9c9c9c;letter-spacing:0.051px;">(N)</span>
<span class="t" style="left:134.34px;top:553.00px;font-size:14.0px;line-height:20px;color:#000;letter-spacing:-0.607px;">16.01.2023</span>
<span class="t" style="left:214.44px;top:553.00px;font-size:14.0px;line-height:20px;color:#000;letter-spacing:-0.607px;">12:00</span>
<span class="t" style="left:274.44px;top:553.00px;font-size:14.0px;line-height:20px;color:#000;letter-spacing:-0.607px;">18:30</span>
<span class="t" style="left:334.44px;top:553.00px;font-size:14.0px;line-height:20px;color:#000;letter-spacing:-0.562px;">0:48</span>
<span class="t" style="left:399.64px;top:553.00px;font-size:14.0px;line-height:20px;color:#d8152f;letter-spacing:-0.562px;">5:37</span>
<span class="t" style="left:464.64px;top:553.00px;font-size:14.0px;line-height:20px;color:#d8152f;letter-spacing:-0.562px;">8:00</span>
<span class="t" style="left:529.44px;top:553.00px;font-size:14.0px;line-height:20px;color:#d8152f;letter-spacing:-0.582px;">-2:08</span>
<span class="t" style="left:909.44px;top:553.00px;font-size:14.0px;line-height:20px;color:#000;letter-spacing:-0.373px;">Maximale Pause überschritte...</span>
<div class="r" style="left:14px;top:574px;width:1236px;height:20px;background:#f4f5fc;"></div>
<span class="t" style="left:42.34px;top:574.00px;font-size:14.0px;line-height:20px;color:#000;letter-spacing:-0.370px;">Di.</span>
<span class="t" style="left:66.19px;top:574.00px;font-size:11.415384615384614px;line-height:20px;color:#9c9c9c;letter-spacing:0.051px;">(N)</span>
<span class="t" style="left:134.34px;top:574.00px;font-size:14.0px;line-height:20px;color:#000;letter-spacing:-0.607px;">17.01.2023</span>
<span class="t" style="left:214.44px;top:574.00px;font-size:14.0px;line-height:20px;color:#000;letter-spacing:-0.607px;">08:00</span>
<span class="t" style="left:274.44px;top:574.00px;font-size:14.0px;line-height:20px;color:#000;letter-spacing:-0.607px;">16:45</span>
<span class="t" style="left:334.44px;top:574.00px;font-size:14.0px;line-height:20px;color:#000;letter-spacing:-0.562px;">0:45</span>
<span class="t" style="left:399.64px;top:574.00px;font-size:14.0px;line-height:20px;color:#000;letter-spacing:-0.562px;">8:00</span>
<span class="t" style="left:464.64px;top:574.00px;font-size:14.0px;line-height:20px;color:#000;letter-spacing:-0.562px;">8:00</span>
<span class="t" style="left:42.34px;top:595.00px;font-size:14.0px;line-height:20px;color:#000;letter-spacing:-0.221px;">Mi.</span>
<span class="t" style="left:67.63px;top:595.00px;font-size:11.415384615384614px;line-height:20px;color:#9c9c9c;letter-spacing:0.051px;">(N)</span>
<span class="t" style="left:134.34px;top:595.00px;font-size:14.0px;line-height:20px;color:#000;letter-spacing:-0.607px;">18.01.2023</span>
<span class="t" style="left:214.44px;top:595.00px;font-size:14.0px;line-height:20px;color:#000;letter-spacing:-0.607px;">07:56</span>
<span class="t" style="left:274.44px;top:595.00px;font-size:14.0px;line-height:20px;color:#000;letter-spacing:-0.607px;">17:56</span>
<span class="t" style="left:334.44px;top:595.00px;font-size:14.0px;line-height:20px;color:#000;letter-spacing:-0.562px;">0:45</span>
<span class="t" style="left:399.64px;top:595.00px;font-size:14.0px;line-height:20px;color:#000;letter-spacing:-0.562px;">9:15</span>
<span class="t" style="left:464.64px;top:595.00px;font-size:14.0px;line-height:20px;color:#000;letter-spacing:-0.562px;">8:00</span>
<span class="t" style="left:529.44px;top:595.00px;font-size:14.0px;line-height:20px;color:#228b22;letter-spacing:-0.485px;">+1:15</span>
<div class="r" style="left:14px;top:616px;width:1236px;height:20px;background:#f4f5fc;"></div>
<span class="t" style="left:42.34px;top:616.00px;font-size:14.0px;line-height:20px;color:#000;letter-spacing:-0.595px;">Do.</span>
<span class="t" style="left:70.53px;top:616.00px;font-size:11.415384615384614px;line-height:20px;color:#9c9c9c;letter-spacing:0.051px;">(N)</span>
<span class="t" style="left:134.34px;top:616.00px;font-size:14.0px;line-height:20px;color:#000;letter-spacing:-0.607px;">19.01.2023</span>
<span class="t" style="left:214.44px;top:616.00px;font-size:14.0px;line-height:20px;color:#000;letter-spacing:-0.607px;">09:15</span>
<span class="t" style="left:274.44px;top:616.00px;font-size:14.0px;line-height:20px;color:#000;letter-spacing:-0.607px;">17:45</span>
<span class="t" style="left:334.44px;top:616.00px;font-size:14.0px;line-height:20px;color:#000;letter-spacing:-0.562px;">0:37</span>
<span class="t" style="left:399.64px;top:616.00px;font-size:14.0px;line-height:20px;color:#d8152f;letter-spacing:-0.562px;">7:53</span>
<span class="t" style="left:464.64px;top:616.00px;font-size:14.0px;line-height:20px;color:#d8152f;letter-spacing:-0.562px;">8:00</span>
<span class="t" style="left:529.44px;top:616.00px;font-size:14.0px;line-height:20px;color:#d8152f;letter-spacing:-0.582px;">-0:07</span>
<div class="r" style="left:14px;top:637px;width:1236px;height:20px;background:#fdf0dc;"></div>
<div class="r" style="left:519px;top:637px;width:64px;height:20px;background:#d8e5da;"></div>
<svg class="r" style="left:24px;top:644px" width="8" height="8" viewBox="0 0 8 8"><defs><linearGradient id="gq" x1="0" y1="0" x2="1" y2="1"><stop offset="0" stop-color="#ffe24a"/><stop offset="1" stop-color="#f0b000"/></linearGradient></defs><rect x="0.5" y="0.5" width="7" height="7" fill="url(#gq)" stroke="#c39a1e" stroke-width="1"/></svg>
<span class="t" style="left:42.34px;top:637.00px;font-size:14.0px;line-height:20px;color:#000;letter-spacing:-0.110px;">Fr.</span>
<span class="t" style="left:134.34px;top:637.00px;font-size:14.0px;line-height:20px;color:#000;letter-spacing:-0.607px;">20.01.2023</span>
<span class="t" style="left:214.44px;top:637.00px;font-size:14.0px;line-height:20px;color:#000;letter-spacing:-0.607px;">08:42</span>
<span class="t" style="left:274.44px;top:637.00px;font-size:14.0px;line-height:20px;color:#000;letter-spacing:-0.607px;">18:19</span>
<span class="t" style="left:334.44px;top:637.00px;font-size:14.0px;line-height:20px;color:#000;letter-spacing:-0.562px;">0:47</span>
<span class="t" style="left:399.64px;top:637.00px;font-size:14.0px;line-height:20px;color:#000;letter-spacing:-0.562px;">8:50</span>
<span class="t" style="left:464.64px;top:637.00px;font-size:14.0px;line-height:20px;color:#000;letter-spacing:-0.562px;">8:00</span>
<span class="t" style="left:529.44px;top:637.00px;font-size:14.0px;line-height:20px;color:#228b22;letter-spacing:-0.485px;">+1:00</span>
<span class="t" style="left:909.44px;top:637.00px;font-size:14.0px;line-height:20px;color:#000;letter-spacing:-0.373px;">Maximale Pause überschritte...</span>
<div class="r" style="left:14px;top:658px;width:1236px;height:20px;background:#f4f5fc;"></div>
<span class="t" style="left:42.34px;top:658.00px;font-size:14.0px;line-height:20px;color:#000;letter-spacing:-0.446px;">Mo.</span>
<span class="t" style="left:71.97px;top:658.00px;font-size:11.415384615384614px;line-height:20px;color:#9c9c9c;letter-spacing:0.051px;">(N)</span>
<span class="t" style="left:134.34px;top:658.00px;font-size:14.0px;line-height:20px;color:#000;letter-spacing:-0.607px;">23.01.2023</span>
<span class="t" style="left:214.44px;top:658.00px;font-size:14.0px;line-height:20px;color:#000;letter-spacing:-0.607px;">09:28</span>
<span class="t" style="left:274.44px;top:658.00px;font-size:14.0px;line-height:20px;color:#000;letter-spacing:-0.607px;">17:30</span>
<span class="t" style="left:334.44px;top:658.00px;font-size:14.0px;line-height:20px;color:#000;letter-spacing:-0.562px;">0:38</span>
<span class="t" style="left:399.64px;top:658.00px;font-size:14.0px;line-height:20px;color:#d8152f;letter-spacing:-0.562px;">7:24</span>
<span class="t" style="left:464.64px;top:658.00px;font-size:14.0px;line-height:20px;color:#d8152f;letter-spacing:-0.562px;">8:00</span>
<span class="t" style="left:529.44px;top:658.00px;font-size:14.0px;line-height:20px;color:#d8152f;letter-spacing:-0.582px;">-0:36</span>
<span class="t" style="left:42.34px;top:679.00px;font-size:14.0px;line-height:20px;color:#000;letter-spacing:-0.370px;">Di.</span>
<span class="t" style="left:66.19px;top:679.00px;font-size:11.415384615384614px;line-height:20px;color:#9c9c9c;letter-spacing:0.051px;">(N)</span>
<span class="t" style="left:134.34px;top:679.00px;font-size:14.0px;line-height:20px;color:#000;letter-spacing:-0.607px;">24.01.2023</span>
<span class="t" style="left:214.44px;top:679.00px;font-size:14.0px;line-height:20px;color:#000;letter-spacing:-0.607px;">08:00</span>
<span class="t" style="left:274.44px;top:679.00px;font-size:14.0px;line-height:20px;color:#000;letter-spacing:-0.607px;">18:00</span>
<span class="t" style="left:334.44px;top:679.00px;font-size:14.0px;line-height:20px;color:#000;letter-spacing:-0.562px;">0:45</span>
<span class="t" style="left:399.64px;top:679.00px;font-size:14.0px;line-height:20px;color:#000;letter-spacing:-0.562px;">9:15</span>
<span class="t" style="left:464.64px;top:679.00px;font-size:14.0px;line-height:20px;color:#000;letter-spacing:-0.562px;">8:00</span>
<span class="t" style="left:529.44px;top:679.00px;font-size:14.0px;line-height:20px;color:#228b22;letter-spacing:-0.485px;">+1:15</span>
<div class="r" style="left:14px;top:700px;width:1236px;height:20px;background:#f4f5fc;"></div>
<div class="r" style="left:519px;top:700px;width:64px;height:20px;background:#d5e8f5;"></div>
<span class="t" style="left:42.34px;top:700.00px;font-size:14.0px;line-height:20px;color:#000;letter-spacing:-0.221px;">Mi.</span>
<span class="t" style="left:67.63px;top:700.00px;font-size:11.415384615384614px;line-height:20px;color:#9c9c9c;letter-spacing:0.051px;">(N)</span>
<span class="t" style="left:134.34px;top:700.00px;font-size:14.0px;line-height:20px;color:#000;letter-spacing:-0.607px;">25.01.2023</span>
<span class="t" style="left:214.44px;top:700.00px;font-size:14.0px;line-height:20px;color:#000;letter-spacing:-0.607px;">10:06</span>
<span class="t" style="left:274.44px;top:700.00px;font-size:14.0px;line-height:20px;color:#000;letter-spacing:-0.607px;">19:33</span>
<span class="t" style="left:334.44px;top:700.00px;font-size:14.0px;line-height:20px;color:#000;letter-spacing:-0.562px;">0:45</span>
<span class="t" style="left:399.64px;top:700.00px;font-size:14.0px;line-height:20px;color:#000;letter-spacing:-0.562px;">8:42</span>
<span class="t" style="left:464.64px;top:700.00px;font-size:14.0px;line-height:20px;color:#000;letter-spacing:-0.562px;">8:00</span>
<span class="t" style="left:529.44px;top:700.00px;font-size:14.0px;line-height:20px;color:#228b22;letter-spacing:-0.485px;">+1:28</span>
<span class="t" style="left:909.44px;top:700.00px;font-size:14.0px;line-height:20px;color:#000;letter-spacing:-0.448px;">Zuschlag Spätarbeit</span>
<span class="t" style="left:42.34px;top:721.00px;font-size:14.0px;line-height:20px;color:#000;letter-spacing:-0.595px;">Do.</span>
<span class="t" style="left:70.53px;top:721.00px;font-size:11.415384615384614px;line-height:20px;color:#9c9c9c;letter-spacing:0.051px;">(N)</span>
<span class="t" style="left:134.34px;top:721.00px;font-size:14.0px;line-height:20px;color:#000;letter-spacing:-0.607px;">26.01.2023</span>
<span class="t" style="left:214.44px;top:721.00px;font-size:14.0px;line-height:20px;color:#000;letter-spacing:-0.607px;">07:50</span>
<span class="t" style="left:274.44px;top:721.00px;font-size:14.0px;line-height:20px;color:#000;letter-spacing:-0.607px;">16:38</span>
<span class="t" style="left:334.44px;top:721.00px;font-size:14.0px;line-height:20px;color:#000;letter-spacing:-0.562px;">0:30</span>
<span class="t" style="left:399.64px;top:721.00px;font-size:14.0px;line-height:20px;color:#000;letter-spacing:-0.562px;">8:18</span>
<span class="t" style="left:464.64px;top:721.00px;font-size:14.0px;line-height:20px;color:#000;letter-spacing:-0.562px;">8:00</span>
<span class="t" style="left:529.44px;top:721.00px;font-size:14.0px;line-height:20px;color:#228b22;letter-spacing:-0.485px;">+0:18</span>
<div class="r" style="left:14px;top:742px;width:1236px;height:20px;background:#f6ecdc;"></div>
<svg class="r" style="left:24px;top:749px" width="8" height="8" viewBox="0 0 8 8"><defs><linearGradient id="gq" x1="0" y1="0" x2="1" y2="1"><stop offset="0" stop-color="#ffe24a"/><stop offset="1" stop-color="#f0b000"/></linearGradient></defs><rect x="0.5" y="0.5" width="7" height="7" fill="url(#gq)" stroke="#c39a1e" stroke-width="1"/></svg>
<span class="t" style="left:42.34px;top:742.00px;font-size:14.0px;line-height:20px;color:#000;letter-spacing:-0.110px;">Fr.</span>
<span class="t" style="left:65.46px;top:742.00px;font-size:11.415384615384614px;line-height:20px;color:#9c9c9c;letter-spacing:0.051px;">(N)</span>
<span class="t" style="left:134.34px;top:742.00px;font-size:14.0px;line-height:20px;color:#000;letter-spacing:-0.607px;">27.01.2023</span>
<span class="t" style="left:214.44px;top:742.00px;font-size:14.0px;line-height:20px;color:#000;letter-spacing:-0.607px;">08:00</span>
<span class="t" style="left:274.44px;top:742.00px;font-size:14.0px;line-height:20px;color:#000;letter-spacing:-0.607px;">17:00</span>
<span class="t" style="left:334.44px;top:742.00px;font-size:14.0px;line-height:20px;color:#000;letter-spacing:-0.562px;">1:00</span>
<span class="t" style="left:399.64px;top:742.00px;font-size:14.0px;line-height:20px;color:#000;letter-spacing:-0.562px;">8:00</span>
<span class="t" style="left:464.64px;top:742.00px;font-size:14.0px;line-height:20px;color:#000;letter-spacing:-0.562px;">8:00</span>
<span class="t" style="left:909.44px;top:742.00px;font-size:14.0px;line-height:20px;color:#000;letter-spacing:-0.440px;">Maximale Pause überschritten</span>
<span class="t" style="left:42.34px;top:763.00px;font-size:14.0px;line-height:20px;color:#000;letter-spacing:-0.446px;">Mo.</span>
<span class="t" style="left:71.97px;top:763.00px;font-size:11.415384615384614px;line-height:20px;color:#9c9c9c;letter-spacing:0.051px;">(N)</span>
<span class="t" style="left:134.34px;top:763.00px;font-size:14.0px;line-height:20px;color:#000;letter-spacing:-0.607px;">30.01.2023</span>
<span class="t" style="left:214.44px;top:763.00px;font-size:14.0px;line-height:20px;color:#000;letter-spacing:-0.607px;">08:00</span>
<span class="t" style="left:274.44px;top:763.00px;font-size:14.0px;line-height:20px;color:#000;letter-spacing:-0.607px;">17:00</span>
<span class="t" style="left:334.44px;top:763.00px;font-size:14.0px;line-height:20px;color:#000;letter-spacing:-0.562px;">0:45</span>
<span class="t" style="left:399.64px;top:763.00px;font-size:14.0px;line-height:20px;color:#000;letter-spacing:-0.562px;">8:15</span>
<span class="t" style="left:464.64px;top:763.00px;font-size:14.0px;line-height:20px;color:#000;letter-spacing:-0.562px;">8:00</span>
<span class="t" style="left:529.44px;top:763.00px;font-size:14.0px;line-height:20px;color:#228b22;letter-spacing:-0.485px;">+0:15</span>
<div class="r" style="left:14px;top:784px;width:1236px;height:20px;background:#f4f5fc;"></div>
<span class="t" style="left:42.34px;top:784.00px;font-size:14.0px;line-height:20px;color:#000;letter-spacing:-0.370px;">Di.</span>
<span class="t" style="left:134.34px;top:784.00px;font-size:14.0px;line-height:20px;color:#000;letter-spacing:-0.607px;">31.01.2023</span>
<span class="t" style="left:214.44px;top:784.00px;font-size:14.0px;line-height:20px;color:#000;letter-spacing:-0.607px;">14:18</span>
<span class="t" style="left:274.44px;top:784.00px;font-size:14.0px;line-height:20px;color:#000;letter-spacing:-0.607px;">15:42</span>
<span class="t" style="left:399.64px;top:784.00px;font-size:14.0px;line-height:20px;color:#d8152f;letter-spacing:-0.562px;">1:24</span>
<span class="t" style="left:464.64px;top:784.00px;font-size:14.0px;line-height:20px;color:#d8152f;letter-spacing:-0.562px;">8:00</span>
<span class="t" style="left:529.44px;top:784.00px;font-size:14.0px;line-height:20px;color:#d8152f;letter-spacing:-0.582px;">-6:36</span>
<div class="r" style="left:123px;top:298px;width:1px;height:23px;background:#e4e4e4;"></div>
<div class="r" style="left:123px;top:322px;width:1px;height:504px;background:rgba(255,255,255,0.55);"></div>
<div class="r" style="left:123px;top:322px;width:1px;height:504px;background:rgba(0,0,0,0.035);"></div>
<div class="r" style="left:203px;top:298px;width:1px;height:23px;background:#e4e4e4;"></div>
<div class="r" style="left:203px;top:322px;width:1px;height:504px;background:rgba(255,255,255,0.55);"></div>
<div class="r" style="left:203px;top:322px;width:1px;height:504px;background:rgba(0,0,0,0.035);"></div>
<div class="r" style="left:263px;top:298px;width:1px;height:23px;background:#e4e4e4;"></div>
<div class="r" style="left:263px;top:322px;width:1px;height:504px;background:rgba(255,255,255,0.55);"></div>
<div class="r" style="left:263px;top:322px;width:1px;height:504px;background:rgba(0,0,0,0.035);"></div>
<div class="r" style="left:323px;top:298px;width:1px;height:23px;background:#e4e4e4;"></div>
<div class="r" style="left:323px;top:322px;width:1px;height:504px;background:rgba(255,255,255,0.55);"></div>
<div class="r" style="left:323px;top:322px;width:1px;height:504px;background:rgba(0,0,0,0.035);"></div>
<div class="r" style="left:388px;top:298px;width:1px;height:23px;background:#e4e4e4;"></div>
<div class="r" style="left:388px;top:322px;width:1px;height:504px;background:rgba(255,255,255,0.55);"></div>
<div class="r" style="left:388px;top:322px;width:1px;height:504px;background:rgba(0,0,0,0.035);"></div>
<div class="r" style="left:453px;top:298px;width:1px;height:23px;background:#e4e4e4;"></div>
<div class="r" style="left:453px;top:322px;width:1px;height:504px;background:rgba(255,255,255,0.55);"></div>
<div class="r" style="left:453px;top:322px;width:1px;height:504px;background:rgba(0,0,0,0.035);"></div>
<div class="r" style="left:518px;top:298px;width:1px;height:23px;background:#e4e4e4;"></div>
<div class="r" style="left:518px;top:322px;width:1px;height:504px;background:rgba(255,255,255,0.55);"></div>
<div class="r" style="left:518px;top:322px;width:1px;height:504px;background:rgba(0,0,0,0.035);"></div>
<div class="r" style="left:583px;top:298px;width:1px;height:23px;background:#e4e4e4;"></div>
<div class="r" style="left:583px;top:322px;width:1px;height:504px;background:rgba(255,255,255,0.55);"></div>
<div class="r" style="left:583px;top:322px;width:1px;height:504px;background:rgba(0,0,0,0.035);"></div>
<div class="r" style="left:648px;top:298px;width:1px;height:23px;background:#e4e4e4;"></div>
<div class="r" style="left:648px;top:322px;width:1px;height:504px;background:rgba(255,255,255,0.55);"></div>
<div class="r" style="left:648px;top:322px;width:1px;height:504px;background:rgba(0,0,0,0.035);"></div>
<div class="r" style="left:698px;top:298px;width:1px;height:23px;background:#e4e4e4;"></div>
<div class="r" style="left:698px;top:322px;width:1px;height:504px;background:rgba(255,255,255,0.55);"></div>
<div class="r" style="left:698px;top:322px;width:1px;height:504px;background:rgba(0,0,0,0.035);"></div>
<div class="r" style="left:778px;top:298px;width:1px;height:23px;background:#e4e4e4;"></div>
<div class="r" style="left:778px;top:322px;width:1px;height:504px;background:rgba(255,255,255,0.55);"></div>
<div class="r" style="left:778px;top:322px;width:1px;height:504px;background:rgba(0,0,0,0.035);"></div>
<div class="r" style="left:898px;top:298px;width:1px;height:23px;background:#e4e4e4;"></div>
<div class="r" style="left:898px;top:322px;width:1px;height:504px;background:rgba(255,255,255,0.55);"></div>
<div class="r" style="left:898px;top:322px;width:1px;height:504px;background:rgba(0,0,0,0.035);"></div>
<div class="r" style="left:1098px;top:298px;width:1px;height:23px;background:#e4e4e4;"></div>
<div class="r" style="left:1098px;top:322px;width:1px;height:504px;background:rgba(255,255,255,0.55);"></div>
<div class="r" style="left:1098px;top:322px;width:1px;height:504px;background:rgba(0,0,0,0.035);"></div>
<div class="r" style="left:13px;top:342px;width:1237px;height:1px;background:#f6f6f8;"></div>
<div class="r" style="left:13px;top:363px;width:1237px;height:1px;background:#f6f6f8;"></div>
<div class="r" style="left:13px;top:384px;width:1237px;height:1px;background:#f6f6f8;"></div>
<div class="r" style="left:13px;top:405px;width:1237px;height:1px;background:#f6f6f8;"></div>
<div class="r" style="left:13px;top:426px;width:1237px;height:1px;background:#f6f6f8;"></div>
<div class="r" style="left:13px;top:447px;width:1237px;height:1px;background:#f6f6f8;"></div>
<div class="r" style="left:13px;top:468px;width:1237px;height:1px;background:#f6f6f8;"></div>
<div class="r" style="left:13px;top:489px;width:1237px;height:1px;background:#f6f6f8;"></div>
<div class="r" style="left:13px;top:510px;width:1237px;height:1px;background:#f6f6f8;"></div>
<div class="r" style="left:13px;top:531px;width:1237px;height:1px;background:#f6f6f8;"></div>
<div class="r" style="left:13px;top:552px;width:1237px;height:1px;background:#f6f6f8;"></div>
<div class="r" style="left:13px;top:573px;width:1237px;height:1px;background:#f6f6f8;"></div>
<div class="r" style="left:13px;top:594px;width:1237px;height:1px;background:#f6f6f8;"></div>
<div class="r" style="left:13px;top:615px;width:1237px;height:1px;background:#f6f6f8;"></div>
<div class="r" style="left:13px;top:636px;width:1237px;height:1px;background:#f6f6f8;"></div>
<div class="r" style="left:13px;top:657px;width:1237px;height:1px;background:#f6f6f8;"></div>
<div class="r" style="left:13px;top:678px;width:1237px;height:1px;background:#f6f6f8;"></div>
<div class="r" style="left:13px;top:699px;width:1237px;height:1px;background:#f6f6f8;"></div>
<div class="r" style="left:13px;top:720px;width:1237px;height:1px;background:#f6f6f8;"></div>
<div class="r" style="left:13px;top:741px;width:1237px;height:1px;background:#f6f6f8;"></div>
<div class="r" style="left:13px;top:762px;width:1237px;height:1px;background:#f6f6f8;"></div>
<div class="r" style="left:13px;top:783px;width:1237px;height:1px;background:#f6f6f8;"></div>
<div class="r" style="left:13px;top:804px;width:1237px;height:1px;background:#f6f6f8;"></div>
<div class="r" style="left:13px;top:825px;width:1237px;height:1px;background:#f6f6f8;"></div>
<div class="r" style="left:123px;top:532px;width:1px;height:20px;background:#fff;"></div>
<div class="r" style="left:203px;top:532px;width:1px;height:20px;background:#fff;"></div>
<div class="r" style="left:263px;top:532px;width:1px;height:20px;background:#fff;"></div>
<div class="r" style="left:323px;top:532px;width:1px;height:20px;background:#fff;"></div>
<div class="r" style="left:388px;top:532px;width:1px;height:20px;background:#fff;"></div>
<div class="r" style="left:453px;top:532px;width:1px;height:20px;background:#fff;"></div>
<div class="r" style="left:518px;top:532px;width:1px;height:20px;background:#fff;"></div>
<div class="r" style="left:583px;top:532px;width:1px;height:20px;background:#fff;"></div>
<div class="r" style="left:648px;top:532px;width:1px;height:20px;background:#fff;"></div>
<div class="r" style="left:698px;top:532px;width:1px;height:20px;background:#fff;"></div>
<div class="r" style="left:778px;top:532px;width:1px;height:20px;background:#fff;"></div>
<div class="r" style="left:898px;top:532px;width:1px;height:20px;background:#fff;"></div>
<div class="r" style="left:1098px;top:532px;width:1px;height:20px;background:#fff;"></div>
<div class="r" style="left:123px;top:805px;width:1px;height:20px;background:#fff;"></div>
<div class="r" style="left:203px;top:805px;width:1px;height:20px;background:#fff;"></div>
<div class="r" style="left:263px;top:805px;width:1px;height:20px;background:#fff;"></div>
<svg class="r" style="left:888.6px;top:542px" width="8" height="4" viewBox="0 0 8 4"><path d="M0 0 H7.2 L3.6 3.3 Z" fill="#5a99cd"/></svg>
<span class="t" style="left:23.64px;top:805.00px;font-size:14.0px;line-height:20px;color:#000;font-weight:bold;letter-spacing:-0.717px;">Gesamt:</span>
<span class="t" style="left:334.44px;top:805.00px;font-size:14.0px;line-height:20px;color:#000;font-weight:bold;text-decoration:underline;letter-spacing:-0.761px;">14:23</span>
<span class="t" style="left:399.44px;top:805.00px;font-size:14.0px;line-height:20px;color:#000;font-weight:bold;text-decoration:underline;letter-spacing:-0.766px;">167:30</span>
<span class="t" style="left:464.44px;top:805.00px;font-size:14.0px;line-height:20px;color:#000;font-weight:bold;text-decoration:underline;letter-spacing:-0.766px;">168:00</span>
<span class="t" style="left:529.44px;top:805.00px;font-size:14.0px;line-height:20px;color:#000;font-weight:bold;text-decoration:underline;letter-spacing:-0.639px;">+1:42</span>
<div class="r" style="left:594px;top:820.6px;width:4px;height:1.5px;background:#000;"></div>
<div class="r" style="left:659px;top:820.6px;width:4px;height:1.5px;background:#000;"></div>
<div class="r" style="left:709px;top:820.6px;width:4px;height:1.5px;background:#000;"></div>
<div class="r" style="left:14px;top:851px;width:1236px;height:16px;background:#f0f0f0;"></div>
<div class="r" style="left:31px;top:851px;width:1088px;height:16px;background:#cdcdcd;"></div>
<svg class="r" style="left:19px;top:854.3px" width="7" height="9" viewBox="0 0 7 9"><path d="M5.5 0.8 L1.5 4.5 L5.5 8.2" fill="none" stroke="#444" stroke-width="1.7"/></svg>
<svg class="r" style="left:1238.5px;top:854.3px" width="7" height="9" viewBox="0 0 7 9"><path d="M1.5 0.8 L5.5 4.5 L1.5 8.2" fill="none" stroke="#444" stroke-width="1.7"/></svg>
<div class="r" style="left:7px;top:879px;width:1250px;height:239px;background:#fff;border:1px solid #b9b9b9;"></div>
<div class="r" style="left:7px;top:879px;width:1250px;height:1px;background:#9c9c9c;"></div>
<div class="r" style="left:8px;top:880px;width:1248px;height:20px;background:#f6f6f6;"></div>
<div class="r" style="left:8px;top:900px;width:1248px;height:1px;background:#b4b4b4;"></div>
<span class="t" style="left:14.40px;top:880.00px;font-size:12.923076923076923px;line-height:20px;color:#000;font-weight:bold;letter-spacing:-0.429px;">Gebuchte Zeitstempel - 13.01.2023</span>
<svg class="r" style="left:1245px;top:885px" width="8" height="6" viewBox="0 0 8 6"><path d="M0 6 L4 0 L8 6 Z" fill="#000"/></svg>
<span class="t" style="left:16.40px;top:925.00px;font-size:12px;line-height:20px;color:#000;letter-spacing:0.101px;">Nachtrag</span>
<span class="t" style="left:77.60px;top:925.00px;font-size:12px;line-height:20px;color:#000;letter-spacing:0.184px;">Neue Pause</span>
<span class="t" style="left:157.80px;top:925.00px;font-size:12px;line-height:20px;color:#a8a8a8;letter-spacing:0.138px;">Löschen</span>
<span class="t" style="left:216.50px;top:925.00px;font-size:12px;line-height:20px;color:#a8a8a8;letter-spacing:0.073px;">Bearbeiten</span>
<span class="t" style="left:291.40px;top:925.00px;font-size:12px;line-height:20px;color:#000;letter-spacing:0.035px;">Drucken</span>
<svg class="r" style="left:349px;top:924px" width="8" height="4" viewBox="0 0 8 4"><path d="M0.2 0 H7.6 L3.9 3.7 Z" fill="#222"/></svg>
<span class="t" style="left:365.30px;top:925.00px;font-size:12px;line-height:20px;color:#000;letter-spacing:-0.196px;">Export</span>
<span class="t" style="left:414.40px;top:925.00px;font-size:12px;line-height:20px;color:#000;letter-spacing:0.189px;">Gruppierung</span>
<svg class="r" style="left:494.5px;top:924px" width="8" height="4" viewBox="0 0 8 4"><path d="M0.2 0 H7.6 L3.9 3.7 Z" fill="#222"/></svg>
<div class="r" style="left:507px;top:905px;width:1px;height:37px;background:#a0a0a0;"></div>
<span class="t" style="left:519.60px;top:925.00px;font-size:12px;line-height:20px;color:#000;letter-spacing:0.013px;">Optionen</span>
<svg class="r" style="left:580.7px;top:924px" width="8" height="4" viewBox="0 0 8 4"><path d="M0.2 0 H7.6 L3.9 3.7 Z" fill="#222"/></svg>
<svg class="r" style="left:34px;top:911px" width="14" height="14" viewBox="0 0 14 14"><path d="M5 0 H9 V5 H14 V9 H9 V14 H5 V9 H0 V5 H5 Z" fill="#99c354"/></svg>
<svg class="r" style="left:106px;top:910px" width="15" height="15" viewBox="0 0 15 15"><path d="M3.4 1.3 H6.8 C5 2.2 7.8 3.4 5.2 5.4" fill="none" stroke="#5a83a3" stroke-width="1.3"/><path d="M1 6 H10 V9.2 C10 11.2 8.6 12 5.5 12 C2.4 12 1 11.2 1 9.2 Z" fill="#151515"/><path d="M10 7.2 H11 C13.2 7.2 13.2 10.6 11 10.6 H9.6" fill="none" stroke="#151515" stroke-width="1.3"/><path d="M2.5 7.2 V9.2 C2.5 10 2.9 10.4 3.5 10.6" fill="none" stroke="#fff" stroke-width="0.9"/><path d="M0 13.1 H11.2 C10.6 14.6 9 15 5.6 15 C2.2 15 0.6 14.6 0 13.1 Z" fill="#151515"/></svg>
<svg class="r" style="left:175px;top:912px" width="13" height="12" viewBox="0 0 13 12"><path d="M1.6 1.2 L11.4 10.8 M11.4 1.2 L1.6 10.8" stroke="#949494" stroke-width="2.9"/></svg>
<svg class="r" style="left:239px;top:910px" width="15" height="15" viewBox="0 0 15 15"><rect x="0.6" y="2.8" width="10.8" height="11.6" rx="1.3" fill="#fff" stroke="#161616" stroke-width="1.2"/><path d="M8 2.8 H11.4 V6" stroke="#fff" stroke-width="1.6" fill="none"/><path d="M2.5 1.5 V3.9 M4.5 1.5 V3.9 M6.5 1.5 V3.9" stroke="#161616" stroke-width="1" stroke-linecap="round"/><circle cx="8.4" cy="2" r="0.55" fill="#161616"/><path d="M11.4 6.6 V13" stroke="#161616" stroke-width="1.2"/><path d="M3.2 11.4 L4.3 8.9 L6.1 10.7 Z" fill="#8a8a8a"/><path d="M5.1 9.9 L11.4 3.6" stroke="#8a8a8a" stroke-width="2.7"/><path d="M5.6 9.4 L10.6 4.4" stroke="#fff" stroke-width="0.7" stroke-dasharray="1.2 0.8"/><rect x="10.7" y="0.9" width="2.8" height="2.8" rx="0.5" fill="#fff" stroke="#8a8a8a" stroke-width="1.1" transform="rotate(45 12.1 2.3)"/></svg>
<svg class="r" style="left:307px;top:910px" width="14" height="15" viewBox="0 0 14 15"><path d="M3.5 7 V1.3 H10.5 V7" fill="#e6fbff" stroke="#4787a8" stroke-width="1"/><path d="M5.2 3.4 H8.8 M5.2 5.4 H8.8" stroke="#4787a8" stroke-width="1"/><rect x="0" y="6.9" width="14" height="7.1" rx="1.6" fill="#111"/><rect x="2" y="11" width="9.8" height="1.9" fill="#fff"/><rect x="2" y="8.1" width="1.9" height="0.8" rx="0.4" fill="#fff"/></svg>
<svg class="r" style="left:376px;top:910px" width="14" height="16" viewBox="0 0 14 16"><path d="M0.7 1.4 H8 L11.5 4.9 V14.4 H0.7 Z" fill="#fff" stroke="#111" stroke-width="1.2" stroke-linejoin="round"/><path d="M8 1.4 V4.9 H11.5" fill="none" stroke="#111" stroke-width="1.2"/><rect x="4.7" y="7.6" width="8.6" height="7.7" fill="#dcf5e8" stroke="#1e6b3a" stroke-width="1.3"/><path d="M7.3 9.5 L10.8 13.5 M10.8 9.5 L7.3 13.5" stroke="#176337" stroke-width="1.5"/></svg>
<svg class="r" style="left:442px;top:912px" width="14" height="12" viewBox="0 0 14 12"><path d="M2.6 11.5 H1.6 C1 11.5 0.7 11.1 0.7 10.5 V1.7 C0.7 1.1 1.1 0.7 1.7 0.7 H5.3 L7.3 2.7 H11.8 V4.2" fill="#fff" stroke="#151515" stroke-width="1.2" stroke-linejoin="round"/><rect x="2.2" y="4" width="10.8" height="8" rx="1" fill="#1a1a1a"/></svg>
<svg class="r" style="left:539px;top:912px" width="11" height="13" viewBox="0 0 11 13"><rect x="0.5" y="0.5" width="9" height="11.2" fill="#f2fdff" stroke="#4f88aa" stroke-width="1"/><path d="M2.8 4.4 L4.4 5.9 L7.7 2.2 M3 8.4 L4.6 9.8 L7.7 6.3" fill="none" stroke="#16202e" stroke-width="1.5"/></svg>
<div class="r" style="left:11px;top:946px;width:1242px;height:168px;background:#fff;border:1px solid #727272;"></div>
<span class="t" style="left:18.94px;top:950.00px;font-size:14.0px;line-height:20px;color:#000;letter-spacing:-0.647px;">Datum</span>
<span class="t" style="left:162.14px;top:950.00px;font-size:14.0px;line-height:20px;color:#000;letter-spacing:-0.379px;">Von</span>
<span class="t" style="left:222.14px;top:950.00px;font-size:14.0px;line-height:20px;color:#000;letter-spacing:-0.149px;">Bis</span>
<span class="t" style="left:282.14px;top:950.00px;font-size:14.0px;line-height:20px;color:#000;letter-spacing:-0.826px;">Dauer</span>
<span class="t" style="left:456.14px;top:950.00px;font-size:14.0px;line-height:20px;color:#000;letter-spacing:-0.604px;">Modus</span>
<span class="t" style="left:536.14px;top:950.00px;font-size:14.0px;line-height:20px;color:#000;letter-spacing:-0.601px;">Nachtrag</span>
<span class="t" style="left:606.14px;top:950.00px;font-size:14.0px;line-height:20px;color:#000;letter-spacing:-0.345px;">Arbeitsplatz</span>
<span class="t" style="left:726.14px;top:950.00px;font-size:14.0px;line-height:20px;color:#000;letter-spacing:-0.595px;">Kommentar</span>
<div class="r" style="left:13px;top:971px;width:1237px;height:20px;background:#f4f5fc;"></div>
<span class="t" style="left:23.84px;top:971.00px;font-size:14.0px;line-height:20px;color:#000;letter-spacing:-0.607px;">13.01.2023</span>
<span class="t" style="left:166.44px;top:971.00px;font-size:14.0px;line-height:20px;color:#000;letter-spacing:-0.607px;">10:41</span>
<span class="t" style="left:226.44px;top:971.00px;font-size:14.0px;line-height:20px;color:#000;letter-spacing:-0.399px;">11:59</span>
<span class="t" style="left:286.44px;top:971.00px;font-size:14.0px;line-height:20px;color:#000;letter-spacing:-0.562px;">1:18</span>
<span class="t" style="left:563.64px;top:971.00px;font-size:14.0px;line-height:20px;color:#000;letter-spacing:0.000px;">J</span>
<span class="t" style="left:23.84px;top:992.00px;font-size:14.0px;line-height:20px;color:#000;font-style:italic;letter-spacing:-0.607px;">13.01.2023</span>
<span class="t" style="left:166.44px;top:992.00px;font-size:14.0px;line-height:20px;color:#000;font-style:italic;letter-spacing:-0.399px;">11:59</span>
<span class="t" style="left:226.44px;top:992.00px;font-size:14.0px;line-height:20px;color:#000;font-style:italic;letter-spacing:-0.607px;">12:37</span>
<span class="t" style="left:286.44px;top:992.00px;font-size:14.0px;line-height:20px;color:#000;font-style:italic;letter-spacing:-0.562px;">0:38</span>
<span class="t" style="left:459.84px;top:992.00px;font-size:14.0px;line-height:20px;color:#000;font-style:italic;letter-spacing:-0.539px;">Pause</span>
<span class="t" style="left:563.64px;top:992.00px;font-size:14.0px;line-height:20px;color:#000;font-style:italic;letter-spacing:0.000px;">J</span>
<div class="r" style="left:13px;top:1013px;width:1237px;height:20px;background:#f4f5fc;"></div>
<span class="t" style="left:23.84px;top:1013.00px;font-size:14.0px;line-height:20px;color:#000;letter-spacing:-0.607px;">13.01.2023</span>
<span class="t" style="left:166.44px;top:1013.00px;font-size:14.0px;line-height:20px;color:#000;letter-spacing:-0.607px;">12:37</span>
<span class="t" style="left:226.44px;top:1013.00px;font-size:14.0px;line-height:20px;color:#000;letter-spacing:-0.607px;">17:15</span>
<span class="t" style="left:286.44px;top:1013.00px;font-size:14.0px;line-height:20px;color:#000;letter-spacing:-0.562px;">4:38</span>
<span class="t" style="left:563.64px;top:1013.00px;font-size:14.0px;line-height:20px;color:#000;letter-spacing:0.000px;">J</span>
<span class="t" style="left:23.34px;top:1034.00px;font-size:14.0px;line-height:20px;color:#000;font-weight:bold;letter-spacing:-0.717px;">Gesamt:</span>
<span class="t" style="left:286.14px;top:1034.00px;font-size:14.0px;line-height:20px;color:#000;font-weight:bold;text-decoration:underline;letter-spacing:-0.755px;">5:56</span>
<span class="t" style="left:319.64px;top:1034.00px;font-size:14.0px;line-height:20px;color:#8a8a8a;letter-spacing:-0.786px;">h</span>
<div class="r" style="left:155px;top:947px;width:1px;height:24px;background:#e4e4e4;"></div>
<div class="r" style="left:155px;top:971px;width:1px;height:84px;background:rgba(255,255,255,0.55);"></div>
<div class="r" style="left:155px;top:971px;width:1px;height:84px;background:rgba(0,0,0,0.035);"></div>
<div class="r" style="left:215px;top:947px;width:1px;height:24px;background:#e4e4e4;"></div>
<div class="r" style="left:215px;top:971px;width:1px;height:84px;background:rgba(255,255,255,0.55);"></div>
<div class="r" style="left:215px;top:971px;width:1px;height:84px;background:rgba(0,0,0,0.035);"></div>
<div class="r" style="left:275px;top:947px;width:1px;height:24px;background:#e4e4e4;"></div>
<div class="r" style="left:275px;top:971px;width:1px;height:84px;background:rgba(255,255,255,0.55);"></div>
<div class="r" style="left:275px;top:971px;width:1px;height:84px;background:rgba(0,0,0,0.035);"></div>
<div class="r" style="left:449px;top:947px;width:1px;height:24px;background:#e4e4e4;"></div>
<div class="r" style="left:449px;top:971px;width:1px;height:84px;background:rgba(255,255,255,0.55);"></div>
<div class="r" style="left:449px;top:971px;width:1px;height:84px;background:rgba(0,0,0,0.035);"></div>
<div class="r" style="left:529px;top:947px;width:1px;height:24px;background:#e4e4e4;"></div>
<div class="r" style="left:529px;top:971px;width:1px;height:84px;background:rgba(255,255,255,0.55);"></div>
<div class="r" style="left:529px;top:971px;width:1px;height:84px;background:rgba(0,0,0,0.035);"></div>
<div class="r" style="left:599px;top:947px;width:1px;height:24px;background:#e4e4e4;"></div>
<div class="r" style="left:599px;top:971px;width:1px;height:84px;background:rgba(255,255,255,0.55);"></div>
<div class="r" style="left:599px;top:971px;width:1px;height:84px;background:rgba(0,0,0,0.035);"></div>
<div class="r" style="left:719px;top:947px;width:1px;height:24px;background:#e4e4e4;"></div>
<div class="r" style="left:719px;top:971px;width:1px;height:84px;background:rgba(255,255,255,0.55);"></div>
<div class="r" style="left:719px;top:971px;width:1px;height:84px;background:rgba(0,0,0,0.035);"></div>
<div class="r" style="left:1019px;top:947px;width:1px;height:24px;background:#e4e4e4;"></div>
<div class="r" style="left:1019px;top:971px;width:1px;height:84px;background:rgba(255,255,255,0.55);"></div>
<div class="r" style="left:1019px;top:971px;width:1px;height:84px;background:rgba(0,0,0,0.035);"></div>
<div class="r" style="left:13px;top:991px;width:1007px;height:1px;background:#f6f6f8;"></div>
<div class="r" style="left:13px;top:1012px;width:1007px;height:1px;background:#f6f6f8;"></div>
<div class="r" style="left:13px;top:1033px;width:1007px;height:1px;background:#f6f6f8;"></div>
<div class="r" style="left:13px;top:1054px;width:1007px;height:1px;background:#f6f6f8;"></div>
<span class="t" style="left:24.50px;top:1125.00px;font-size:12px;line-height:20px;color:#000;letter-spacing:-0.198px;">Fr. Schälchli (DANI) *</span>
<div class="r" style="left:155px;top:1124px;width:1px;height:20px;background:#d8d8d8;"></div>
<svg class="r" style="left:4px;top:1128px" width="14" height="14" viewBox="0 0 14 14"><circle cx="6" cy="3.5" r="3.8" fill="#151515"/><path d="M1 13.7 C0.8 10.2 2.6 8.8 6 8.8 C8.4 8.8 10 9.6 10.6 11 V13.7 Z" fill="#151515"/><circle cx="10.5" cy="9.9" r="3.3" fill="#fff" stroke="#2a3540" stroke-width="0.8"/><rect x="9.8" y="7.9" width="1.5" height="4" fill="#1f4e79"/></svg>
<svg class="r" style="left:1247px;top:1131px" width="12" height="12" viewBox="0 0 12 12"><g fill="#bdbdbd"><rect x="9" y="9" width="2" height="2"/><rect x="5" y="9" width="2" height="2"/><rect x="9" y="5" width="2" height="2"/><rect x="1" y="9" width="2" height="2"/><rect x="9" y="1" width="2" height="2"/><rect x="5" y="5" width="2" height="2"/></g></svg>
</div></body></html>
